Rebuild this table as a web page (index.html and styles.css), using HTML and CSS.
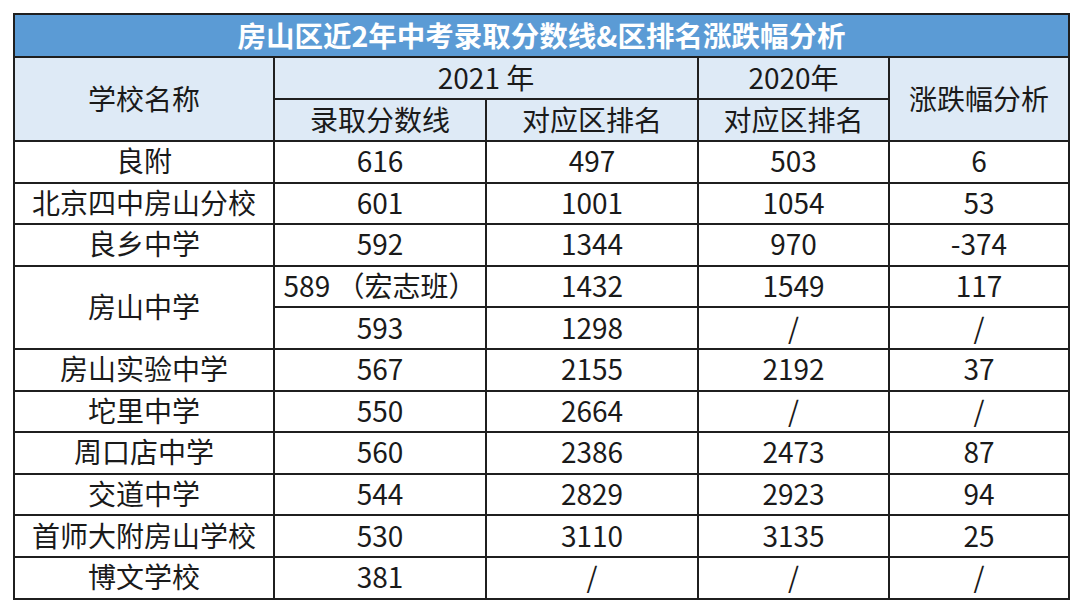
FILE: index.html
```html
<!DOCTYPE html>
<html lang="zh-CN">
<head>
<meta charset="utf-8">
<title>房山区近2年中考录取分数线&区排名涨跌幅分析</title>
<link rel="stylesheet" href="styles.css">
</head>
<body>
<table class="score-table">
  <colgroup>
    <col class="c-name">
    <col class="c-score">
    <col class="c-rank">
    <col class="c-rank20">
    <col class="c-diff">
  </colgroup>
  <thead>
    <tr class="title-row"><th colspan="5">房山区近2年中考录取分数线&amp;区排名涨跌幅分析</th></tr>
    <tr class="head-row">
      <th rowspan="2">学校名称</th>
      <th colspan="2">2021 年</th>
      <th>2020年</th>
      <th rowspan="2">涨跌幅分析</th>
    </tr>
    <tr class="head-row">
      <th>录取分数线</th>
      <th>对应区排名</th>
      <th>对应区排名</th>
    </tr>
  </thead>
  <tbody>
    <tr><td>良附</td><td>616</td><td>497</td><td>503</td><td>6</td></tr>
    <tr><td>北京四中房山分校</td><td>601</td><td>1001</td><td>1054</td><td>53</td></tr>
    <tr><td>良乡中学</td><td>592</td><td>1344</td><td>970</td><td>-374</td></tr>
    <tr><td rowspan="2">房山中学</td><td>589 （宏志班）</td><td>1432</td><td>1549</td><td>117</td></tr>
    <tr><td>593</td><td>1298</td><td>/</td><td>/</td></tr>
    <tr><td>房山实验中学</td><td>567</td><td>2155</td><td>2192</td><td>37</td></tr>
    <tr><td>坨里中学</td><td>550</td><td>2664</td><td>/</td><td>/</td></tr>
    <tr><td>周口店中学</td><td>560</td><td>2386</td><td>2473</td><td>87</td></tr>
    <tr><td>交道中学</td><td>544</td><td>2829</td><td>2923</td><td>94</td></tr>
    <tr><td>首师大附房山学校</td><td>530</td><td>3110</td><td>3135</td><td>25</td></tr>
    <tr><td>博文学校</td><td>381</td><td>/</td><td>/</td><td>/</td></tr>
  </tbody>
</table>
</body>
</html>
```

FILE: styles.css
```css
html, body {
  margin: 0;
  padding: 0;
  background: #ffffff;
}

body {
  padding: 13px 0 0 13px;
  font-family: "Noto Sans CJK SC", "Noto Sans", sans-serif;
  color: #1a1a1a;
}

.score-table {
  border-collapse: collapse;
  table-layout: fixed;
  width: 1055px;
  border: 2px solid #1f1f1f;
}

.c-name { width: 260px; }
.c-score { width: 212px; }
.c-rank { width: 212px; }
.c-rank20 { width: 191px; }
.c-diff { width: 180px; }

.score-table th,
.score-table td {
  border: 2px solid #1f1f1f;
  padding: 0;
  text-align: center;
  vertical-align: middle;
  font-size: 28px;
  line-height: 1;
  font-weight: 400;
  white-space: nowrap;
}

.title-row th {
  height: 39px;
  padding: 1px 0 1px;
  background: #5b9bd5;
  color: #ffffff;
  font-weight: 700;
  font-size: 28.5px;
}

.head-row th {
  height: 37px;
  padding: 0 0 3px;
  background: #deeaf6;
  color: #1a1a1a;
}

.score-table tbody td {
  height: 36.6px;
  padding: 0 0 3px;
}
```
